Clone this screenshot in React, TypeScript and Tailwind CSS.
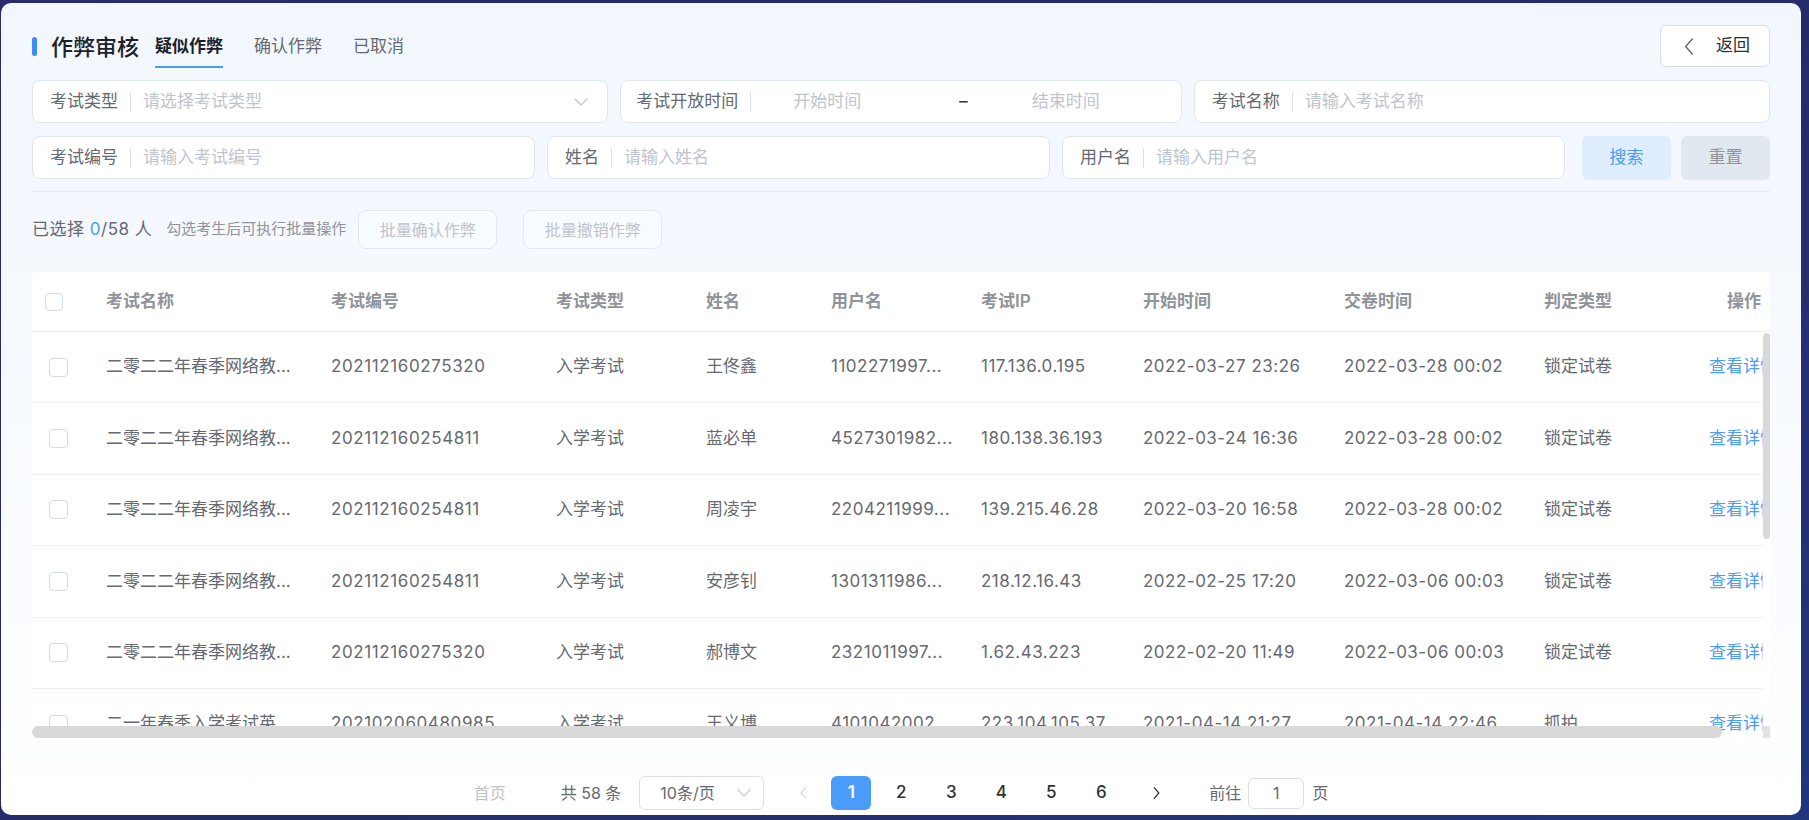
import React from 'react'

interface Row {
  name: string
  code: string
  type: string
  person: string
  user: string
  ip: string
  start: string
  submit: string
  verdict: string
}

const rows: Row[] = [
  { name: '二零二二年春季网络教...', code: '202112160275320', type: '入学考试', person: '王佟鑫', user: '1102271997...', ip: '117.136.0.195', start: '2022-03-27 23:26', submit: '2022-03-28 00:02', verdict: '锁定试卷' },
  { name: '二零二二年春季网络教...', code: '202112160254811', type: '入学考试', person: '蓝必单', user: '4527301982...', ip: '180.138.36.193', start: '2022-03-24 16:36', submit: '2022-03-28 00:02', verdict: '锁定试卷' },
  { name: '二零二二年春季网络教...', code: '202112160254811', type: '入学考试', person: '周凌宇', user: '2204211999...', ip: '139.215.46.28', start: '2022-03-20 16:58', submit: '2022-03-28 00:02', verdict: '锁定试卷' },
  { name: '二零二二年春季网络教...', code: '202112160254811', type: '入学考试', person: '安彦钊', user: '1301311986...', ip: '218.12.16.43', start: '2022-02-25 17:20', submit: '2022-03-06 00:03', verdict: '锁定试卷' },
  { name: '二零二二年春季网络教...', code: '202112160275320', type: '入学考试', person: '郝博文', user: '2321011997...', ip: '1.62.43.223', start: '2022-02-20 11:49', submit: '2022-03-06 00:03', verdict: '锁定试卷' },
  { name: '二一年春季入学考试英...', code: '202102060480985', type: '入学考试', person: '王义博', user: '4101042002...', ip: '223.104.105.37', start: '2021-04-14 21:27', submit: '2021-04-14 22:46', verdict: '抓拍' },
]

const ChevronDown = () => (
  <svg width="14" height="8" viewBox="0 0 14 8" fill="none">
    <path d="M1 1L7 7L13 1" stroke="#c0c4cc" strokeWidth="1.2" strokeLinecap="round" strokeLinejoin="round" />
  </svg>
)

const ChevronLeft = ({ color = '#606266', w = 10, h = 17 }: { color?: string; w?: number; h?: number }) => (
  <svg width={w} height={h} viewBox="0 0 10 18" fill="none">
    <path d="M8.5 1L1.5 9L8.5 17" stroke={color} strokeWidth="1.4" strokeLinecap="round" strokeLinejoin="round" />
  </svg>
)

const ChevronRight = ({ color = '#303133' }: { color?: string }) => (
  <svg width="7" height="12" viewBox="0 0 10 18" fill="none">
    <path d="M1.5 1L8.5 9L1.5 17" stroke={color} strokeWidth="1.8" strokeLinecap="round" strokeLinejoin="round" />
  </svg>
)

function Field({ label, placeholder, className = '', chevron = false }: { label: string; placeholder: string; className?: string; chevron?: boolean }) {
  return (
    <div className={`flex items-center h-[43px] bg-white border border-[#dfe6ef] rounded-lg pl-[17px] pr-[13px] ${className}`}>
      <span className="text-[17px] text-[#66696f] whitespace-nowrap">{label}</span>
      <span className="mx-[12px] w-px h-[20px] bg-[#dcdfe6]" />
      <span className="text-[17px] text-[#c0c4cc] whitespace-nowrap">{placeholder}</span>
      {chevron && (
        <span className="ml-auto mr-[6px] flex items-center">
          <ChevronDown />
        </span>
      )}
    </div>
  )
}

const Checkbox = ({ size }: { size: string }) => (
  <span className={`block ${size} rounded-[4px] border border-[#d3dde9] bg-white`} />
)

export default function App() {
  return (
    <div className="w-[1809px] h-[820px] overflow-hidden bg-gradient-to-br from-[#2b2a6c] via-[#262b69] to-[#22357c] pt-[3px] pl-[1px] font-[Inter,'Noto_Sans_CJK_SC',sans-serif]">
      <div className="w-[1800px] h-[812px] rounded-[10px] bg-gradient-to-b from-[#f2f7fe] via-[#f7faff] to-white px-[31px] pt-[22px] flex flex-col">
        {/* Header */}
        <div className="flex items-stretch h-[43px]">
          <div className="flex items-center">
            <span className="w-[5px] h-[19px] rounded-full bg-[#3b8cf6]" />
            <span className="ml-[14px] text-[22px] font-medium text-[#1d2129] leading-none">作弊审核</span>
          </div>
          <div className="flex items-stretch ml-[16px] gap-[31px]">
            <div className="flex items-center border-b-2 border-[#4a9cf8] text-[17px] font-semibold text-[#1d2129] pt-[2px]">疑似作弊</div>
            <div className="flex items-center border-b-2 border-transparent text-[17px] text-[#66696f] pt-[2px]">确认作弊</div>
            <div className="flex items-center border-b-2 border-transparent text-[17px] text-[#66696f] pt-[2px]">已取消</div>
          </div>
          <button className="ml-auto w-[110px] h-[42px] bg-white border border-[#d7dfea] rounded-md flex items-center pl-[23px]">
            <ChevronLeft />
            <span className="ml-[22px] text-[17px] text-[#303133]">返回</span>
          </button>
        </div>

        {/* Filters row 1 */}
        <div className="mt-[12px] flex gap-[12px]">
          <Field label="考试类型" placeholder="请选择考试类型" className="flex-1" chevron />
          <div className="flex-1 flex items-center h-[43px] bg-white border border-[#dfe6ef] rounded-lg pl-[15px]">
            <span className="text-[17px] text-[#66696f] whitespace-nowrap">考试开放时间</span>
            <span className="mx-[12px] w-px h-[20px] bg-[#dcdfe6]" />
            <span className="ml-[30px] text-[17px] text-[#c0c4cc]">开始时间</span>
            <span className="ml-[98px] text-[17px] text-[#303133]">–</span>
            <span className="ml-[64px] text-[17px] text-[#c0c4cc]">结束时间</span>
          </div>
          <Field label="考试名称" placeholder="请输入考试名称" className="flex-1" />
        </div>

        {/* Filters row 2 */}
        <div className="mt-[13px] flex">
          <Field label="考试编号" placeholder="请输入考试编号" className="w-[503px]" />
          <Field label="姓名" placeholder="请输入姓名" className="w-[503px] ml-[12px]" />
          <Field label="用户名" placeholder="请输入用户名" className="w-[503px] ml-[12px]" />
          <button className="ml-[17px] w-[89px] h-[44px] rounded-md bg-[#deedff] text-[17px] text-[#4a9cf8]">搜索</button>
          <button className="ml-[10px] w-[89px] h-[44px] rounded-md bg-[#e2e8f0] text-[17px] text-[#909399]">重置</button>
        </div>

        <div className="mt-[11px] h-px bg-[#e4ebf4]" />

        {/* Batch bar */}
        <div className="mt-[18px] h-[39px] flex items-center">
          <span className="text-[17px] text-[#66696f] tracking-[0.5px]">
            已选择 <span className="text-[#4a9cf8]">0</span>/58 人
          </span>
          <span className="ml-[14px] text-[15px] text-[#909399]">勾选考生后可执行批量操作</span>
          <button className="ml-[12px] w-[139px] h-[39px] rounded-lg border border-[#e3e8ef] bg-[#f8fbff] text-[16px] text-[#c0c4cc]">批量确认作弊</button>
          <button className="ml-[26px] w-[139px] h-[39px] rounded-lg border border-[#e3e8ef] bg-[#f8fbff] text-[16px] text-[#c0c4cc]">批量撤销作弊</button>
        </div>

        {/* Table */}
        <div className="mt-[23px] bg-white rounded-t-[4px]">
          <div className="flex items-center h-[60px] border-b border-[#ebeef5] text-[17px] font-semibold text-[#909399] whitespace-nowrap">
            <div className="w-[74px] pl-[13px]"><Checkbox size="w-[18px] h-[18px]" /></div>
            <div className="w-[225px]">考试名称</div>
            <div className="w-[225px]">考试编号</div>
            <div className="w-[150px]">考试类型</div>
            <div className="w-[125px]">姓名</div>
            <div className="w-[150px]">用户名</div>
            <div className="w-[162px]">考试IP</div>
            <div className="w-[201px]">开始时间</div>
            <div className="w-[200px]">交卷时间</div>
            <div className="w-[156px]">判定类型</div>
            <div className="flex-1 text-right pr-[9px]">操作</div>
          </div>
          <div className="relative h-[406px] overflow-hidden">
            <div className="w-[1731px]">
              {rows.map((r, i) => (
                <div key={i} className="flex items-center h-[71.4px] border-b border-[#ebeef5] text-[17px] text-[#66696f] whitespace-nowrap overflow-hidden">
                  <div className="w-[74px] shrink-0 pl-[17px]"><Checkbox size="w-[19px] h-[19px]" /></div>
                  <div className="w-[225px] shrink-0">{r.name}</div>
                  <div className="w-[225px] shrink-0 tracking-[0.6px]">{r.code}</div>
                  <div className="w-[150px] shrink-0">{r.type}</div>
                  <div className="w-[125px] shrink-0">{r.person}</div>
                  <div className="w-[150px] shrink-0 tracking-[0.5px]">{r.user}</div>
                  <div className="w-[162px] shrink-0 tracking-[0.5px]">{r.ip}</div>
                  <div className="w-[201px] shrink-0 tracking-[0.5px]">{r.start}</div>
                  <div className="w-[200px] shrink-0 tracking-[0.5px]">{r.submit}</div>
                  <div className="w-[156px] shrink-0">{r.verdict}</div>
                  <div className="shrink-0 pl-[9px] text-[#4a9cf8]">查看详情</div>
                </div>
              ))}
            </div>
            <div className="absolute right-0 top-[1px] w-[7px] h-[206px] rounded-full bg-[#d9d9d9]" />
            <div className="absolute left-0 bottom-0 w-[1690px] h-[12px] rounded-full bg-[#d9d9d9]" />
            <div className="absolute right-0 bottom-0 w-[7px] h-[12px] bg-[#e3e3e3]" />
          </div>
        </div>

        {/* Pagination */}
        <div className="mt-[38px] flex items-center justify-center h-[34px] text-[16px] text-[#66696f]">
          <span className="text-[#c0c4cc]">首页</span>
          <span className="ml-[55px]">共 58 条</span>
          <div className="ml-[18px] w-[125px] h-[34px] flex items-center justify-between pl-[20px] pr-[12px] border border-[#dcdfe6] rounded-md bg-white">
            <span>10条/页</span>
            <ChevronDown />
          </div>
          <div className="ml-[19px] w-[40px] h-[34px] flex items-center justify-center">
            <ChevronLeft color="#c0c4cc" w={7} h={12} />
          </div>
          <div className="ml-[8px] flex gap-[10px]">
            <div className="w-[40px] h-[34px] rounded-md bg-[#4a9cf8] text-white font-semibold text-[17px] flex items-center justify-center">1</div>
            {[2, 3, 4, 5, 6].map(n => (
              <div key={n} className="w-[40px] h-[34px] text-[#303133] font-medium text-[17px] flex items-center justify-center">{n}</div>
            ))}
          </div>
          <div className="ml-[15px] w-[40px] h-[34px] flex items-center justify-center">
            <ChevronRight />
          </div>
          <span className="ml-[33px]">前往</span>
          <div className="ml-[7px] w-[56px] h-[31px] border border-[#dcdfe6] rounded-md bg-white flex items-center justify-center">1</div>
          <span className="ml-[8px]">页</span>
        </div>
      </div>
    </div>
  )
}
